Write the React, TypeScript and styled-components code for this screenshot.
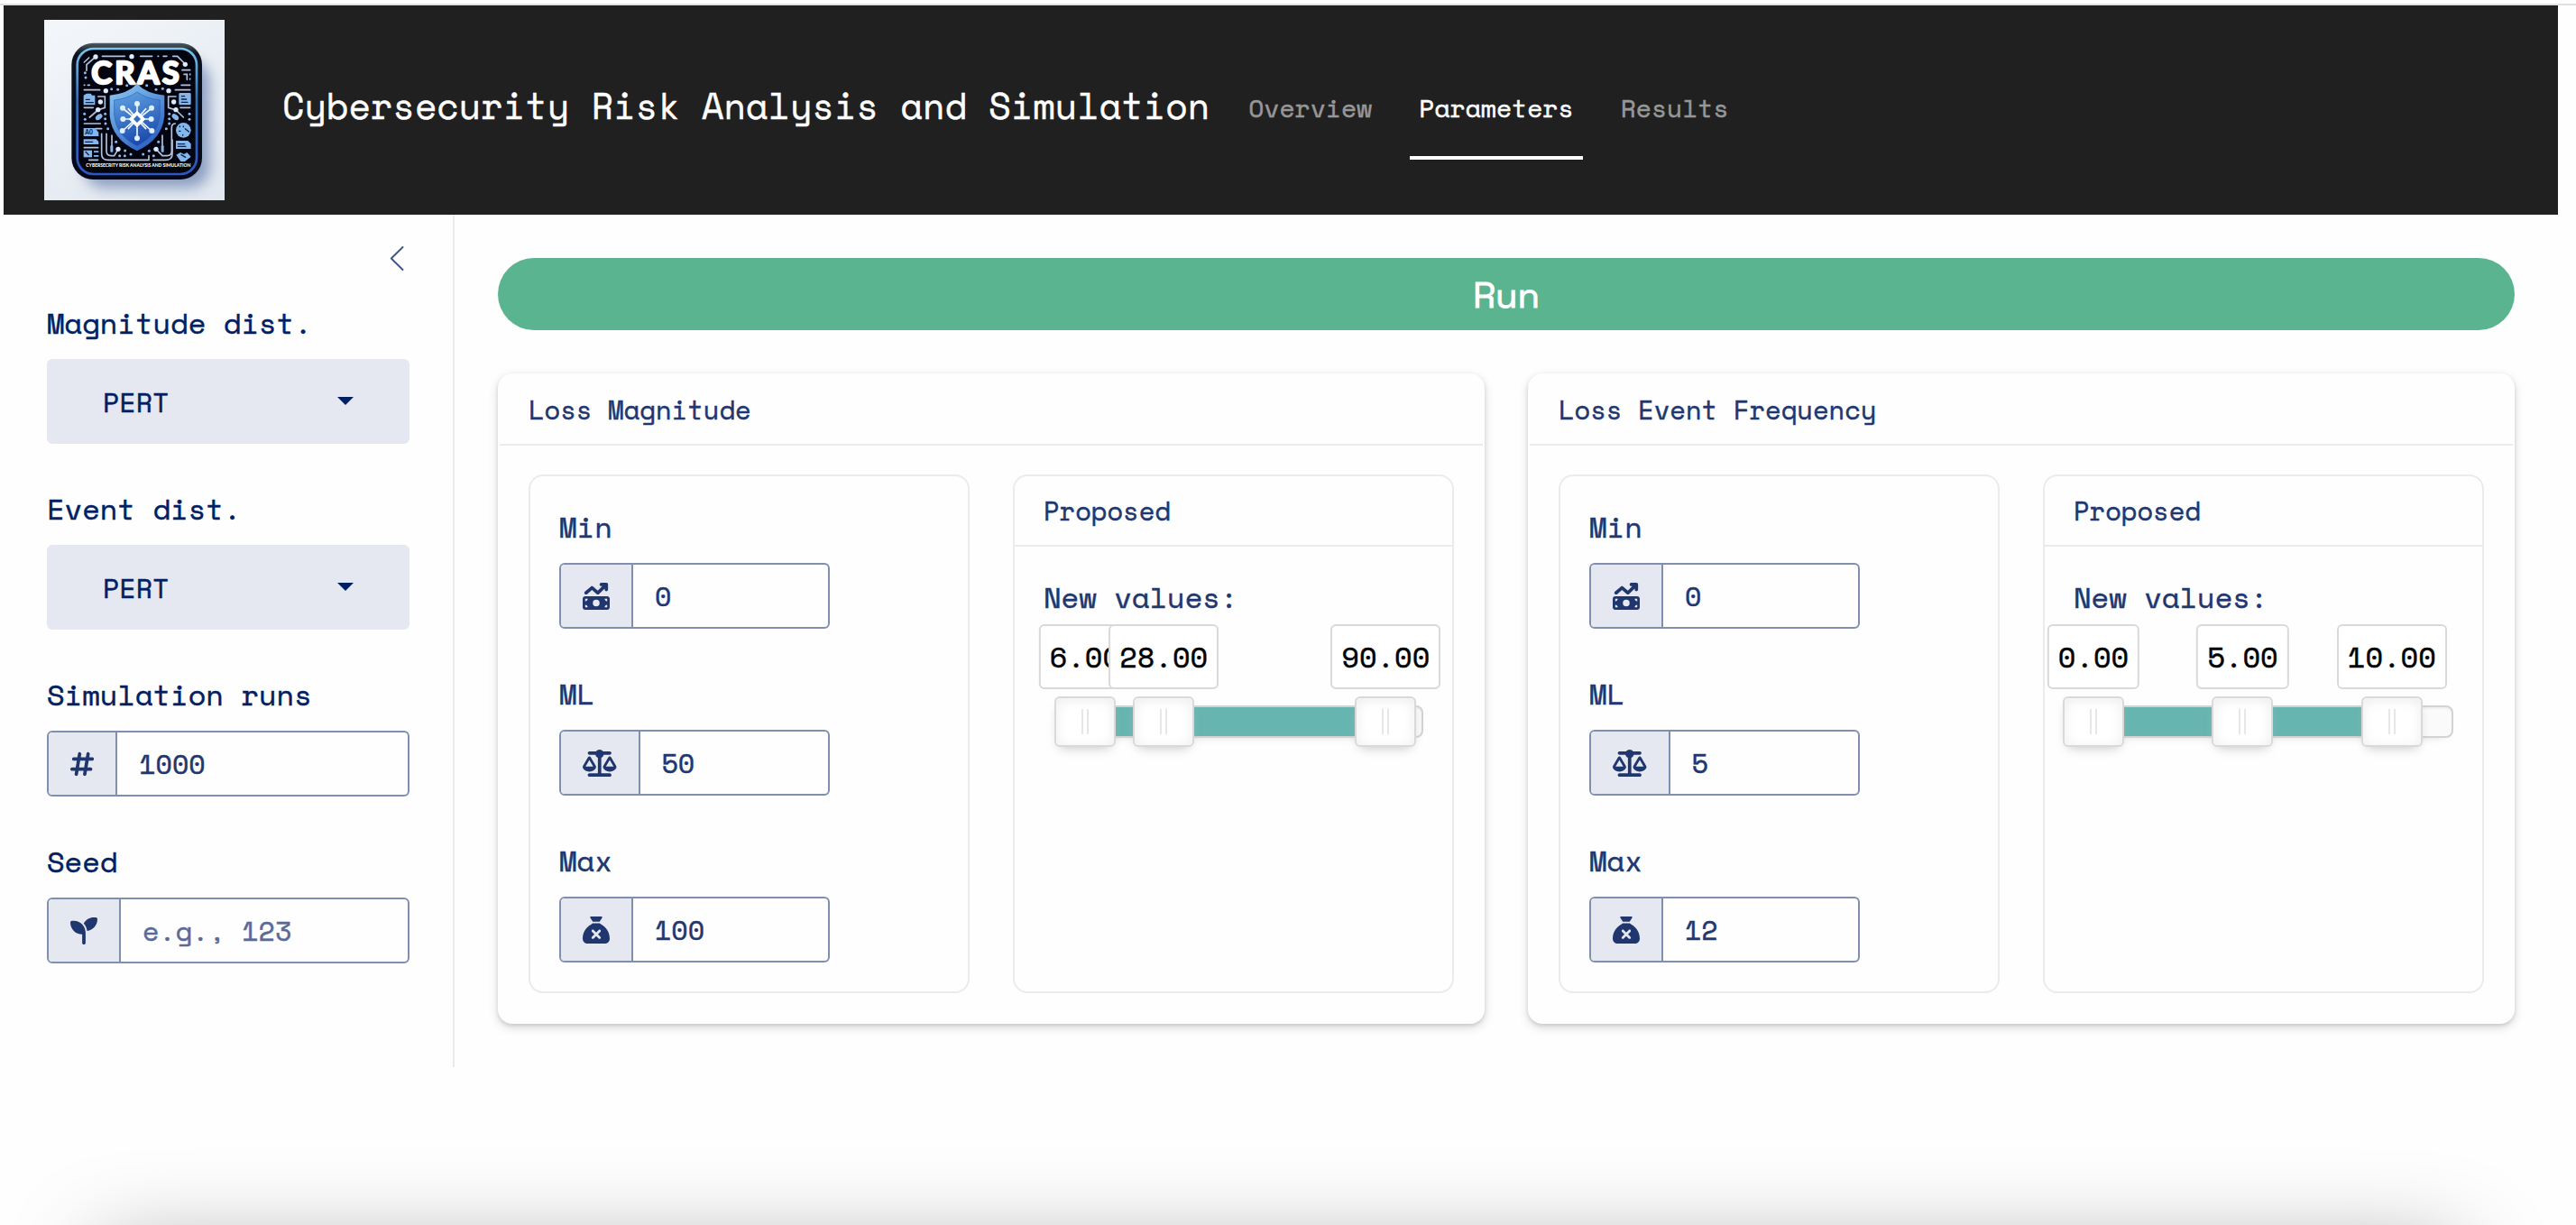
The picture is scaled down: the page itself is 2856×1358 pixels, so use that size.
import React from "react";
import styled, { createGlobalStyle } from "styled-components";
import {
  FaHashtag,
  FaMoneyBillTrendUp,
  FaSackXmark,
  FaScaleBalanced,
  FaSeedling,
} from "react-icons/fa6";

const mono = `"Space Mono", "Liberation Mono", "DejaVu Sans Mono", monospace`;
const sans = `"Space Grotesk", "Liberation Sans", Arial, sans-serif`;
const navy = "#002062";
const ink = "#20366f";
const line = "#ebebeb";
const fieldBorder = "#808fb0";
const tint = "#e5e8f0";

const GlobalStyle = createGlobalStyle`
  * { box-sizing: border-box; }
  html, body { margin: 0; background: #fefefe; overflow: hidden; }
  body { font-family: ${mono}; color: ${ink}; -webkit-text-stroke: 0.5px currentColor; }
`;

const Page = styled.div`
  height: 1358px;
  padding-top: 4px;
  overflow: hidden;
`;

const Header = styled.header`
  display: flex;
  align-items: center;
  height: 232px;
  margin: 0 20px 0 4px;
  padding-left: 45px;
  background: #202020;
`;

const TopStrip = styled.div`
  height: 2px;
  background: #dfe1e0;
`;

const Brand = styled.h1`
  margin: 0 0 0 64px;
  padding-bottom: 10px;
  font-size: 40px;
  font-weight: 400;
  line-height: 60px;
  color: #fff;
  white-space: nowrap;
`;

const Nav = styled.nav`
  display: flex;
  gap: 32px;
  margin: 4px 0 0 33px;
`;

const NavItem = styled.a<{ $active?: boolean }>`
  padding: 31px 10px 36px;
  border-bottom: 4px solid ${(p) => (p.$active ? "#fff" : "transparent")};
  font-size: 28px;
  line-height: 35px;
  color: ${(p) => (p.$active ? "#fff" : "#979797")};
`;

const Layout = styled.div`
  display: flex;
  align-items: flex-start;
`;

const Sidebar = styled.aside`
  display: flex;
  flex-direction: column;
  width: 504px;
  height: 945px;
  padding: 35px 48px 0 52px;
  border-right: 2px solid ${line};
  color: ${navy};
`;

const Collapse = styled.div`
  display: flex;
  justify-content: flex-end;
  height: 64px;
  padding-right: 6px;
`;

const Fields = styled.div`
  display: flex;
  flex-direction: column;
  gap: 51px;
`;

const Field = styled.div`
  display: flex;
  flex-direction: column;
  gap: 19px;
`;

const Label = styled.label`
  display: block;
  font-size: 32px;
  line-height: 42px;
  white-space: nowrap;
`;

const Select = styled.div`
  display: flex;
  align-items: center;
  justify-content: space-between;
  height: 94px;
  padding: 0 62px 0 62px;
  border-radius: 6px;
  background: ${tint};
  font-size: 30px;
`;

const Caret = styled.span`
  margin-bottom: 2px;
  border: 9px solid transparent;
  border-top-color: ${navy};
  border-bottom: 0;
`;

const Group = styled.div<{ $width?: number }>`
  display: flex;
  width: ${(p) => (p.$width ? `${p.$width}px` : "100%")};
  height: 73px;
  border: 2px solid ${fieldBorder};
  border-radius: 6px;
  overflow: hidden;
  color: ${ink};
`;

const Addon = styled.span<{ $iconWidth: number }>`
  display: flex;
  align-items: center;
  padding: 0 24px;
  border-right: 2px solid ${fieldBorder};
  background: ${tint};

  svg {
    display: block;
    flex: none;
    width: ${(p) => p.$iconWidth}px;
    height: 30px;
  }
`;

const Value = styled.span<{ $placeholder?: boolean }>`
  display: flex;
  align-items: center;
  padding-left: 24px;
  font-size: 30px;
  color: ${(p) => (p.$placeholder ? "#5a6a97" : ink)};
  white-space: pre;
`;

const Main = styled.main`
  flex: 1;
  padding: 48px 68px 0 48px;
`;

const RunButton = styled.button`
  display: block;
  width: 100%;
  height: 80px;
  padding: 2px 0 0;
  border: 0;
  border-radius: 40px;
  background: #5ab490;
  color: #fff;
  font-family: ${sans};
  font-size: 40px;
  -webkit-text-stroke: 0.9px #fff;
`;

const Cards = styled.div`
  display: grid;
  grid-template-columns: 1fr 1fr;
  gap: 48px;
  margin-top: 48px;
`;

const Card = styled.section`
  padding: 2px;
  border-radius: 16px;
  background: #fefefe;
  box-shadow: 0 2px 4px rgba(0, 0, 0, 0.12), 0 4px 12px rgba(0, 0, 0, 0.14);
`;

const CardHeader = styled.h2`
  height: 78px;
  margin: 0;
  padding: 0 32px;
  border-bottom: 2px solid ${line};
  font-size: 28.8px;
  font-weight: 400;
  line-height: 76px;
`;

const CardBody = styled.div`
  display: grid;
  grid-template-columns: 1fr 1fr;
  gap: 48px;
  padding: 32px;
`;

const Panel = styled.div`
  height: 575px;
  border: 2px solid ${line};
  border-radius: 16px;
`;

const PanelBody = styled.div`
  padding: 35px 32px 0;
`;

const SliderTrack = styled.div`
  position: relative;
  height: 36px;
  margin: 99px 0 0 20px;
  border: 2px solid #d3d3d3;
  border-radius: 8px;
  background: #fafafa;
  box-shadow: inset 0 2px 2px #f0f0f0, 0 6px 12px -10px #bbb;
`;

const Connect = styled.div`
  position: absolute;
  top: 0;
  height: 32px;
  background: #66b5b0;
`;

const Handle = styled.div`
  position: absolute;
  top: -12px;
  display: flex;
  align-items: center;
  justify-content: center;
  gap: 4px;
  width: 68px;
  height: 56px;
  margin-left: -34px;
  border: 2px solid #d9d9d9;
  border-radius: 6px;
  background: #fff;
  box-shadow: inset 0 0 2px #fff, inset 0 2px 14px #ebebeb, 0 6px 12px -6px #bbb;
`;

const Grip = styled.i`
  width: 2px;
  height: 28px;
  background: #e8e7e6;
`;

const Tip = styled.div`
  position: absolute;
  bottom: 62px;
  left: 50%;
  height: 72px;
  padding: 0 10px;
  transform: translateX(-50%);
  border: 2px solid #d9d9d9;
  border-radius: 6px;
  background: #fff;
  color: #000;
  font-size: 32px;
  line-height: 68px;
`;

const BottomShade = styled.div`
  position: fixed;
  top: 1384px;
  left: 110px;
  right: 130px;
  height: 200px;
  box-shadow: 0 0 100px rgba(0, 0, 0, 0.34);
`;

const LogoArt = styled.svg`
  display: block;
  width: 200px;
  height: 200px;
  -webkit-text-stroke: 0;
`;

function Logo() {
  const lines = "#b4c2da";
  const blue = "#86b7ec";
  return (
    <LogoArt viewBox="147 66 600 600">
      <defs>
        <linearGradient id="bg" x1="0" y1="0" x2="0.6" y2="1">
          <stop offset="0" stopColor="#f4f7fa" />
          <stop offset="1" stopColor="#e2e8f0" />
        </linearGradient>
        <linearGradient id="rim" x1="0" y1="0" x2="0" y2="1">
          <stop offset="0" stopColor="#7cc4ec" />
          <stop offset="0.4" stopColor="#356fae" />
          <stop offset="1" stopColor="#2d57c0" />
        </linearGradient>
        <linearGradient id="shieldRim" x1="0" y1="0" x2="0.6" y2="1">
          <stop offset="0" stopColor="#8fcdf5" />
          <stop offset="1" stopColor="#2f62c4" />
        </linearGradient>
        <linearGradient id="shield" x1="0" y1="0" x2="0.3" y2="1">
          <stop offset="0" stopColor="#62a6e6" />
          <stop offset="1" stopColor="#1d4cae" />
        </linearGradient>
        <linearGradient id="chrome" x1="0" y1="0" x2="0" y2="1">
          <stop offset="0" stopColor="#4c5b66" />
          <stop offset="0.08" stopColor="#0c121c" />
          <stop offset="1" stopColor="#04081a" />
        </linearGradient>
        <filter id="soft" x="-30%" y="-30%" width="160%" height="160%">
          <feGaussianBlur stdDeviation="22" />
        </filter>
      </defs>
      <rect x="147" y="66" width="600" height="600" fill="url(#bg)" />
      <rect x="278" y="200" width="420" height="425" rx="70" fill="#6d84b0" opacity="0.75" filter="url(#soft)" />
      <rect x="238" y="143" width="434" height="454" rx="72" fill="url(#chrome)" />
      <rect x="257" y="162" width="397" height="417" rx="54" fill="#02040f" stroke="url(#rim)" strokeWidth="8" />
      <g stroke={lines} strokeWidth="5" fill="none" strokeLinecap="round">
        <path d="M340 187H415M467 187H506M525 187h2M543 187h12M318 189L288 215V235M280 207L296 192" />
        <path d="M575 187H590L616 213M606 233H632M612 247h10v18M632 246v2M632 262v2" />
        <path d="M280 299H332M583 299H632M280 411H334M280 491H326M603 283H632M280 283h2M292 283h6" />
        <path d="M326 321H349V358L326 366L298 390M560 358V321H585M560 358L585 366L610 390M280 358H310M600 358H632" />
        <path d="M318 428H338M338 445V512Q338 532 360 532H495V518" />
        <path d="M354 445V502Q354 518 370 518H380L393 496M583 411Q571 411 571 425V502Q571 518 555 518H540L519 496" />
        <path d="M573 465V512Q573 532 550 532H510M372 450V495M540 450V495M296 532H326" />
      </g>
      <g fill="#dcecff">
        {[[318,189],[438,188],[616,214],[352,302],[561,302],[334,339],[578,339],[326,365],[585,365],[393,496],[519,496]].map(([x, y]) => (
          <circle key={`${x}-${y}`} cx={x} cy={y} r="8" />
        ))}
      </g>
      <g fill="#8db9ef">
        {[[371,296],[392,298],[422,284],[488,284],[519,298],[541,295],[350,379],[350,395],[351,411],[359,428],[563,379],[563,395],[563,411],[553,428],[386,472],[527,472],[416,501],[435,513],[476,513],[496,502],[398,518],[415,518],[511,518],[283,242],[285,258],[281,379],[283,397],[630,379],[630,397]].map(([x, y]) => (
          <circle key={`${x}-${y}`} cx={x} cy={y} r="4.5" />
        ))}
      </g>
      <g fill={blue}>
        <path d="M278 317l10-6h14l4 6h10v32H278z" />
        <rect x="595" y="309" width="40" height="40" rx="4" />
        <ellipse cx="329" cy="389" rx="13" ry="8" transform="rotate(-40 329 389)" />
        <ellipse cx="583" cy="389" rx="13" ry="8" transform="rotate(40 583 389)" />
        <path d="M278 426h38l12 14v13h-50z" />
        <path d="M278 463h42l8 8v9h-50z" />
        <rect x="278" y="500" width="28" height="23" />
        <path d="M312 502h16v5h-16zM312 516h16v5h-16z" />
        <circle cx="610" cy="433" r="25" />
        <path d="M585 468h40l10 10v17h-50z" />
        <path d="M586 515l14-8 12 6 10-6 13 14-20 16h-14z" />
        <rect x="367" y="484" width="9" height="22" rx="3" />
        <rect x="536" y="484" width="9" height="22" rx="3" />
      </g>
      <g stroke="#0c2048" strokeWidth="4" fill="none" strokeLinecap="round">
        <path d="M286 331h12M286 341h24M604 320h10M604 330h16M604 340h20M592 479h22M592 487h26M284 472h24M285 505l10 10" />
        <path d="M610 420v2M598 420v2M616 428l12 10M608 448v2M596 436h4M603 515l14 8" />
      </g>
      <text x="283" y="447" fontFamily="Lato, sans-serif" fontSize="20" fontWeight="900" fill="#0c2048">A0</text>
      <text x="304" y="279" textLength="292" lengthAdjust="spacing" fontFamily="Lato, sans-serif" fontSize="104" fontWeight="700" fill="#fff" stroke="#fff" strokeWidth="7" strokeLinejoin="round">CRAS</text>
      <path d="M456 279Q488 312 547 317V385Q540 464 456 502Q372 464 365 385V317Q424 312 456 279z" fill="url(#shieldRim)" />
      <path d="M456 306Q486 328 532 333V385Q526 450 456 486Q386 450 380 385V333Q426 328 456 306z" fill="url(#shield)" stroke="#2b62b0" strokeWidth="2" />
      <g stroke="#eef6ff" strokeWidth="5" strokeLinecap="round">
        <path d="M456 345V460M410 396H502M408 360L440 386M504 360L472 386M408 435L440 406M504 435L472 406M427 362L446 384M485 362L466 384M427 428L446 408M485 428L466 408" />
      </g>
      <path d="M456 368L484 396L456 424L428 396z" fill="#fff" />
      <path d="M456 384L468 396L456 408L444 396z" fill="#316bbd" />
      <g fill="#dff0ff">
        {[[456,345],[456,460],[409,396],[503,396],[408,359],[504,359],[407,435],[505,435]].map(([x, y]) => (
          <circle key={`${x}-${y}`} cx={x} cy={y} r="9" />
        ))}
      </g>
      <text x="286" y="556" textLength="348" lengthAdjust="spacingAndGlyphs" fontFamily="Lato, sans-serif" fontSize="17" fontWeight="900" fill="#fff">CYBERSECRITY RISK ANALYSIS AND SIMULATION</text>
    </LogoArt>
  );
}

type InputProps = {
  label: string;
  icon: React.ReactNode;
  iconWidth?: number;
  value: string;
  placeholder?: boolean;
  width?: number;
};

function InputField({ label, icon, iconWidth = 30, value, placeholder, width }: InputProps) {
  return (
    <Field>
      <Label>{label}</Label>
      <Group $width={width}>
        <Addon $iconWidth={iconWidth}>{icon}</Addon>
        <Value $placeholder={placeholder}>{value}</Value>
      </Group>
    </Field>
  );
}

function SelectField({ label, value }: { label: string; value: string }) {
  return (
    <Field>
      <Label>{label}</Label>
      <Select>
        <span>{value}</span>
        <Caret />
      </Select>
    </Field>
  );
}

function Slider({ values, max }: { values: number[]; max: number }) {
  const pos = (v: number) => (v / max) * 100;
  const first = pos(values[0]);
  const last = pos(values[values.length - 1]);
  return (
    <SliderTrack>
      <Connect style={{ left: `${first}%`, width: `${last - first}%` }} />
      {values.map((v) => (
        <Handle key={v} style={{ left: `${pos(v)}%` }}>
          <Grip />
          <Grip />
          <Tip>{v.toFixed(2)}</Tip>
        </Handle>
      ))}
    </SliderTrack>
  );
}

type LossProps = {
  title: string;
  min: string;
  likely: string;
  max: string;
  proposed: number[];
  range: number;
};

function LossCard({ title, min, likely, max, proposed, range }: LossProps) {
  return (
    <Card>
      <CardHeader>{title}</CardHeader>
      <CardBody>
        <Panel>
          <PanelBody>
            <Fields>
              <InputField label="Min" icon={<FaMoneyBillTrendUp />} value={min} width={300} />
              <InputField label="ML" icon={<FaScaleBalanced />} iconWidth={37.5} value={likely} width={300} />
              <InputField label="Max" icon={<FaSackXmark />} value={max} width={300} />
            </Fields>
          </PanelBody>
        </Panel>
        <Panel>
          <CardHeader as="h3">Proposed</CardHeader>
          <PanelBody>
            <Label>New values:</Label>
            <Slider values={proposed} max={range} />
          </PanelBody>
        </Panel>
      </CardBody>
    </Card>
  );
}

export default function App() {
  return (
    <>
      <GlobalStyle />
      <Page>
        <TopStrip />
        <Header>
          <Logo />
          <Brand>Cybersecurity Risk Analysis and Simulation</Brand>
          <Nav>
            <NavItem>Overview</NavItem>
            <NavItem $active>Parameters</NavItem>
            <NavItem>Results</NavItem>
          </Nav>
        </Header>
        <Layout>
          <Sidebar>
            <Collapse>
              <svg width="16" height="27" viewBox="0 0 16 27" fill="none" stroke="#3f5589" strokeWidth="1.9" strokeLinecap="round" strokeLinejoin="round">
                <path d="M14.5 1L1.8 13.5L14.5 26" />
              </svg>
            </Collapse>
            <Fields>
              <SelectField label="Magnitude dist." value="PERT" />
              <SelectField label="Event dist." value="PERT" />
              <InputField label="Simulation runs" icon={<FaHashtag />} iconWidth={26.25} value="1000" />
              <InputField label="Seed" icon={<FaSeedling />} value="e.g., 123" placeholder />
            </Fields>
          </Sidebar>
          <Main>
            <RunButton>Run</RunButton>
            <Cards>
              <LossCard title="Loss Magnitude" min="0" likely="50" max="100" proposed={[6, 28, 90]} range={100} />
              <LossCard title="Loss Event Frequency" min="0" likely="5" max="12" proposed={[0, 5, 10]} range={12} />
            </Cards>
          </Main>
        </Layout>
      </Page>
      <BottomShade />
    </>
  );
}
